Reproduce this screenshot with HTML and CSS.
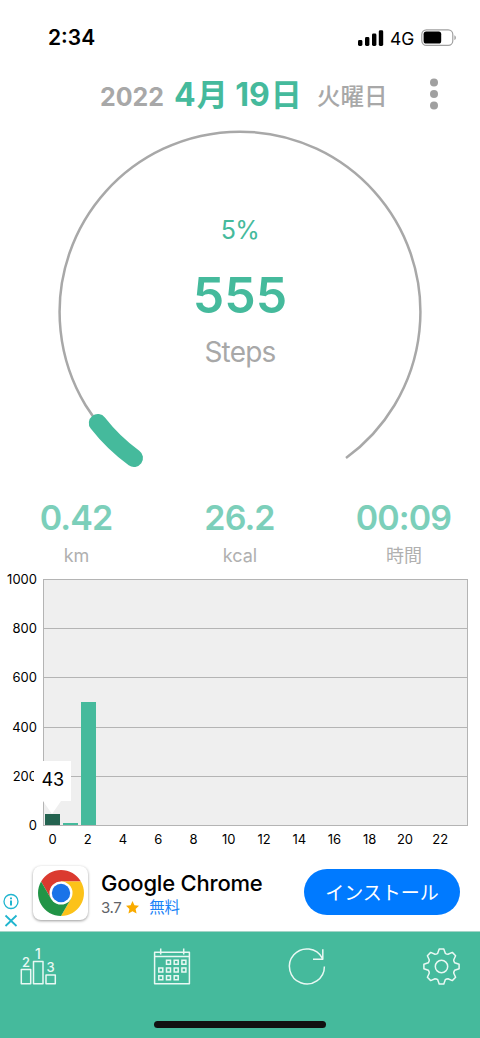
FILE: index.html
```html
<!DOCTYPE html>
<html lang="ja">
<head>
    <meta charset="UTF-8">
    <meta name="viewport" content="width=device-width, initial-scale=1.0">
    <title>歩数計</title>
    <link rel="stylesheet" href="styles.css">
</head>
<body>
    <div class="app">
        <div class="status-bar">
            <span class="clock">2:34</span>
            <svg class="signal" width="26" height="17" viewBox="0 0 26 17">
                <rect x="0" y="10" width="4.4" height="6" rx="1.4"/>
                <rect x="7" y="7" width="4.4" height="9" rx="1.4"/>
                <rect x="14" y="3.5" width="4.4" height="12.5" rx="1.4"/>
                <rect x="20.800" y="0.3" width="4.4" height="15.7" rx="1.4"/>
            </svg>
            <span class="network">4G</span>
            <svg class="battery" width="36" height="18" viewBox="0 0 36 18">
                <rect x="0.8" y="0.8" width="31" height="15.6" rx="4.6" fill="none" stroke="#a0a0a0" stroke-width="1.2"/>
                <rect x="2.6" y="2.6" width="17.6" height="12" rx="2.6"/>
                <path d="M33.4 6.2c2 .8 2 4 0 4.8z" fill="#a0a0a0"/>
            </svg>
        </div>

        <div class="date-bar">
            <span class="year">2022</span>
            <span class="day">4<span class="kanji">月</span> 19<span class="kanji">日</span></span>
            <span class="weekday">火曜日</span>
            <svg class="menu" width="10" height="32" viewBox="0 0 10 32">
                <circle cx="5" cy="4.4" r="4"/>
                <circle cx="5" cy="16" r="4"/>
                <circle cx="5" cy="27.4" r="4"/>
            </svg>
        </div>

        <div class="gauge">
            <svg class="gauge-ring" width="480" height="366" viewBox="0 124 480 366">
                <path class="track" d="M134 458A180.4 180.4 0 1 1 346 458"/>
                <path class="progress" d="M134 458A180.4 180.4 0 0 1 97.8 423"/>
            </svg>
            <div class="gauge-text">
                <span class="percent">5%</span>
                <span class="steps">555</span>
                <span class="steps-label">Steps</span>
            </div>
        </div>

        <div class="stats">
            <div class="stat"><b>0.42</b><span>km</span></div>
            <div class="stat"><b>26.2</b><span>kcal</span></div>
            <div class="stat"><b>00:09</b><span>時間</span></div>
        </div>

        <div class="chart">
            <div class="y-axis">
                <span>1000</span><span>800</span><span>600</span><span>400</span><span>200</span><span>0</span>
            </div>
            <div class="plot">
                <div class="bar selected" style="height: 4.3%">
                    <div class="marker">43</div>
                </div>
                <div class="bar" style="height: 1%"></div>
                <div class="bar" style="height: 50.2%"></div>
            </div>
            <div class="x-axis">
                <span>0</span><span>2</span><span>4</span><span>6</span><span>8</span><span>10</span><span>12</span><span>14</span><span>16</span><span>18</span><span>20</span><span>22</span>
            </div>
        </div>

        <div class="ad">
            <svg class="ad-choices" width="16" height="36" viewBox="0 0 16 36">
                <circle cx="8" cy="8.500" r="7"/>
                <path d="M8 7.500v5M8 4.500v1.800" stroke-width="2"/>
                <path d="M2.5 22.500L13.5 33M13.5 22.500L2.5 33" stroke-width="1.8"/>
            </svg>
            <div class="ad-icon">
                <svg width="46" height="46" viewBox="-23 -23 46 46">
                    <path fill="#db3a2f" d="M-19.9-11.5A23 23 0 0 1 19.9-11.5H0L-9.96 5.75z"/>
                    <path fill="#fcc219" d="M19.9-11.5A23 23 0 0 1 0 23L9.96 5.75 0-11.5z"/>
                    <path fill="#219446" d="M0 23A23 23 0 0 1-19.9-11.5L-9.96 5.75H9.96z"/>
                    <circle r="11.5" fill="#fff"/>
                    <circle r="9.2" fill="#1a73e8"/>
                </svg>
            </div>
            <div class="ad-info">
                <div class="ad-title">Google Chrome</div>
                <div class="ad-meta">
                    <span>3.7</span>
                    <svg width="13" height="13" viewBox="0 0 24 24"><path fill="#f9ab00" d="M12 0l3.6 8 8.4.9-6.3 5.8 1.8 8.5L12 18.9l-7.5 4.3 1.8-8.5L0 8.9 8.4 8z"/></svg>
                    <span class="free">無料</span>
                </div>
            </div>
            <div class="install">インストール</div>
        </div>

        <div class="tab-bar">
            <div class="tabs">
                <svg width="36" height="37" viewBox="0 0 36 37">
                    <path d="M1.3 21.5h9.4v14.2H1.3zM13.5 13.5H23v22.2h-9.500zM26 27h9.300v8.700H26z"/>
                    <text x="6" y="19.1" font-size="13">2</text>
                    <text x="18" y="11.3" font-size="14">1</text>
                    <text x="30.6" y="24.3" font-size="13">3</text>
                </svg>
                <svg width="36" height="37" viewBox="0 0 36 37">
                    <path d="M.6 4.2h34.800v31.500H.6zM.6 8.400h34.800M6.700.4v6M29.700.4v6"/>
                    <path stroke-linejoin="miter" d="M12.500 12.300h4v4h-4zM20.200 12.300h4v4h-4zM27.900 12.300h4v4h-4zM4.800 20h4v4h-4zM12.500 20h4v4h-4zM20.200 20h4v4h-4zM27.900 20h4v4h-4zM4.800 27.700h4v4h-4zM12.500 27.700h4v4h-4zM20.200 27.700h4v4h-4z"/>
                </svg>
                <svg width="36" height="37" viewBox="0 0 36 37">
                    <path d="M35.400 18.400A17.500 17.500 0 1 1 33.400 10.300M33.800 1.300v9.900H24"/>
                </svg>
                <svg width="37" height="37" viewBox="-18.5 -18.5 37 37">
                    <circle r="6.2"/>
                    <path d="M-2.3-17.6H2.3L3.8-13.2Q5.2-12.2 6.5-12.2L10.8-14.1 14.1-10.8 12.2-6.5Q12.2-5.2 13.2-3.8L17.6-2.3V2.3L13.2 3.8Q12.2 5.2 12.2 6.5L14.1 10.8 10.8 14.1 6.5 12.2Q5.2 12.2 3.8 13.2L2.3 17.6H-2.3L-3.8 13.2Q-5.2 12.2-6.5 12.2L-10.8 14.1-14.1 10.8-12.2 6.5Q-12.2 5.2-13.2 3.8L-17.6 2.3V-2.3L-13.2-3.8Q-12.2-5.2-12.2-6.5L-14.1-10.8-10.8-14.1-6.5-12.2Q-5.2-12.2-3.8-13.2z"/>
                </svg>
            </div>
            <div class="home-indicator"></div>
        </div>
    </div>
</body>
</html>
```
FILE: styles.css
```css
* {
    box-sizing: border-box;
}
body {
    margin: 0;
    background: #fff;
    font-family: Inter, "Noto Sans CJK JP", sans-serif;
}
svg {
    display: block;
    flex: none;
}
.app {
    width: 480px;
    height: 1038px;
    display: flex;
    flex-direction: column;
    overflow: hidden;
}

/* status bar */
.status-bar {
    height: 76px;
    padding: 0 23px 0 48px;
    display: flex;
    align-items: center;
}
.clock {
    flex: 1;
    font-size: 21px;
    font-weight: 600;
    line-height: 24px;
}
.network {
    margin: 2px 6px 0 6px;
    width: 25px;
    font-size: 17.5px;
    line-height: 20px;
}

/* date */
.date-bar {
    height: 48px;
    padding-left: 100px;
    display: flex;
    color: #a8a8a8;
    font-weight: 600;
    white-space: nowrap;
}
.year {
    width: 74px;
    padding-top: 6px;
    font-size: 25px;
    font-weight: 700;
    line-height: 30px;
}
.day {
    width: 143px;
    color: #45ba9c;
    font-size: 32px;
    font-weight: 700;
    line-height: 37px;
}
.kanji {
    margin-left: 1px;
    font-size: 31px;
}
.weekday {
    width: 112px;
    padding-top: 6px;
    font-size: 23.5px;
    font-weight: 500;
    line-height: 30px;
}
.menu {
    margin-top: 2px;
    fill: #a0a0a0;
}

/* gauge */
.gauge {
    height: 366px;
    display: grid;
}
.gauge-ring, .gauge-text {
    grid-area: 1 / 1;
}
.gauge-ring path {
    fill: none;
}
.track {
    stroke: #a8a8a8;
    stroke-width: 2.5;
}
.progress {
    stroke: #45ba9c;
    stroke-width: 18;
    stroke-linecap: round;
}
.gauge-text {
    display: flex;
    flex-direction: column;
    align-items: center;
    padding-top: 91px;
    color: #45ba9c;
}
.percent {
    font-size: 25px;
    line-height: 30px;
    letter-spacing: -0.5px;
}
.steps {
    margin-top: 20px;
    font-size: 50px;
    font-weight: 600;
    line-height: 60px;
}
.steps-label {
    margin-top: 10px;
    color: #a8a8a8;
    font-size: 28px;
    line-height: 35px;
    letter-spacing: -0.8px;
}

/* stats */
.stats {
    height: 81px;
    padding: 7px 0 0;
    display: grid;
    grid-template-columns: 152px 175px 153px;
}
.stat {
    display: flex;
    flex-direction: column;
    align-items: center;
}
.stat b {
    color: #7ccfba;
    font-size: 34px;
    font-weight: 600;
    line-height: 42px;
    letter-spacing: -0.9px;
}
.stat span {
    margin: 7px 0 0 1px;
    color: #b0b0b0;
    font-size: 18px;
    line-height: 20px;
}

/* hourly chart */
.chart {
    height: 284px;
    display: grid;
    grid-template-columns: 43px 425px;
    grid-template-rows: 260px 24px;
    font-size: 13px;
    line-height: 16px;
}
.y-axis {
    height: 262px;
    padding-right: 6px;
    display: flex;
    flex-direction: column;
    justify-content: space-between;
    align-items: flex-end;
}
.plot {
    height: 247px;
    margin-top: 8px;
    display: grid;
    grid-template-columns: repeat(24, 1fr);
    align-items: end;
    justify-items: center;
    border: 1px solid #b4b4b4;
    background: repeating-linear-gradient(#efefef 0 48.2px, #b4b4b4 48.2px 49.2px);
}
.bar {
    width: 15px;
    background: #45ba9c;
}
.selected {
    position: relative;
    background: #246350;
}
.marker {
    position: absolute;
    left: -11px;
    bottom: 24px;
    width: 37px;
    height: 40px;
    background: #fff;
    font-size: 18px;
    line-height: 37px;
    text-align: center;
}
.marker::after {
    content: "";
    position: absolute;
    top: 40px;
    left: 9px;
    border: 9.5px solid transparent;
    border-top: 13px solid #fff;
    border-bottom: 0;
}
.x-axis {
    grid-column: 2;
    padding-right: 2px;
    display: grid;
    grid-template-columns: repeat(12, 1fr);
}
.x-axis span {
    width: 19px;
    text-align: center;
}

/* ad banner */
.ad {
    height: 76px;
    padding: 0 20px 0 3px;
    display: flex;
}
.ad-choices {
    margin-top: 38px;
    fill: none;
    stroke: #20b5cf;
    stroke-width: 1.3;
}
.ad-icon {
    width: 55px;
    height: 54px;
    margin: 11px 13px 0 14px;
    padding: 4px 4.5px;
    border-radius: 8px;
    background: #fff;
    box-shadow: 0 1px 3px rgba(0, 0, 0, 0.4);
}
.ad-info {
    flex: 1;
    padding-top: 14px;
    white-space: nowrap;
}
.ad-title {
    font-size: 22px;
    font-weight: 500;
    line-height: 28px;
    letter-spacing: -0.2px;
}
.ad-meta {
    display: flex;
    align-items: center;
    margin-top: 1px;
    color: #5f6368;
    font-size: 15px;
    line-height: 20px;
    letter-spacing: -0.4px;
}
.ad-meta svg {
    margin: -1px 10px 0 5px;
}
.free {
    color: #1a82f7;
    font-size: 15.5px;
}
.install {
    width: 156px;
    height: 46px;
    margin-top: 14px;
    padding-top: 2px;
    border-radius: 23px;
    background: #007aff;
    color: #fff;
    font-size: 19px;
    line-height: 46px;
    text-align: center;
}

/* tabs */
.tab-bar {
    flex: 1;
    background: #45ba9c;
    border-top: 1px solid #a4d4c7;
}
.tabs {
    padding: 16px 20px 0;
    display: flex;
    justify-content: space-between;
}
.tabs svg {
    overflow: visible;
    fill: none;
    stroke: #e9f8f3;
    stroke-width: 1.5;
    stroke-linejoin: round;
}
.tabs text {
    fill: #e9f8f3;
    stroke: none;
    font-weight: 500;
    text-anchor: middle;
}
.home-indicator {
    width: 172px;
    height: 7px;
    margin: 36px auto 0;
    border-radius: 4px;
    background: #111;
}
```
